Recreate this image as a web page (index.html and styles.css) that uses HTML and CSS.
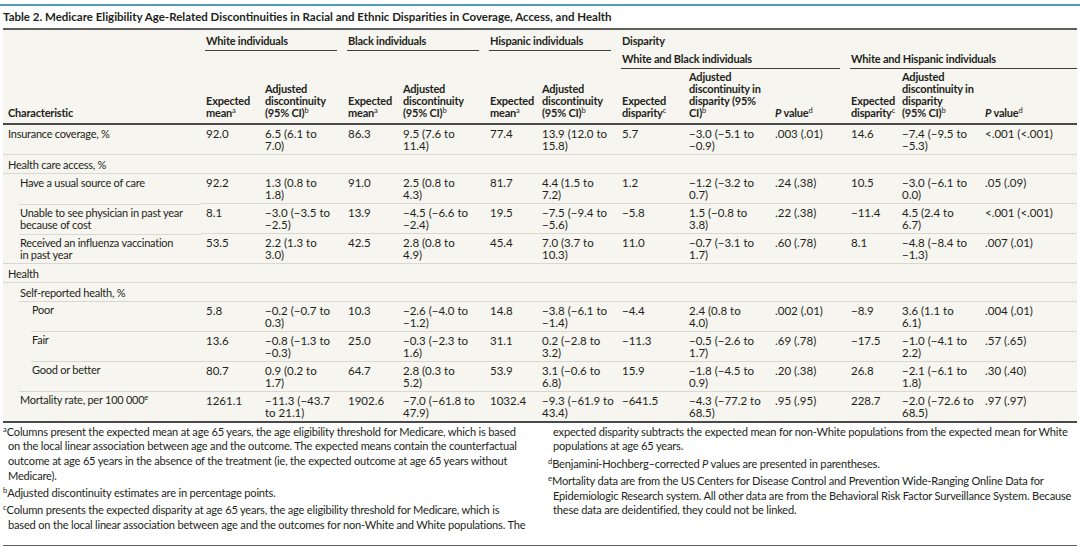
FILE: index.html
```html
<!DOCTYPE html>
<html lang="en">
<head>
<meta charset="utf-8">
<title>Table 2</title>
<link rel="stylesheet" href="styles.css">
</head>
<body>
<div class="page">
  <div class="content">
    <h1 class="title">Table 2. Medicare Eligibility Age-Related Discontinuities in Racial and Ethnic Disparities in Coverage, Access, and Health</h1>
    <table class="tbl">
      <colgroup>
        <col class="w-char">
        <col class="w-2"><col class="w-3"><col class="w-4"><col class="w-5"><col class="w-6"><col class="w-7">
        <col class="w-8"><col class="w-9"><col class="w-10"><col class="w-11"><col class="w-12"><col class="w-13">
      </colgroup>
      <thead>
        <tr class="hr1">
          <th rowspan="3" class="hchar">Characteristic</th>
          <th colspan="2" class="grp"><div>White individuals</div></th>
          <th colspan="2" class="grp"><div>Black individuals</div></th>
          <th colspan="2" class="grp"><div>Hispanic individuals</div></th>
          <th colspan="6" class="grp plain"><div>Disparity</div></th>
        </tr>
        <tr class="hr2">
          <th colspan="6"></th>
          <th colspan="3" class="grp"><div>White and Black individuals</div></th>
          <th colspan="3" class="grp last"><div>White and Hispanic individuals</div></th>
        </tr>
        <tr class="hr3">
          <th>Expected<br>mean<sup>a</sup></th>
          <th>Adjusted<br>discontinuity<br>(95% CI)<sup>b</sup></th>
          <th>Expected<br>mean<sup>a</sup></th>
          <th>Adjusted<br>discontinuity<br>(95% CI)<sup>b</sup></th>
          <th>Expected<br>mean<sup>a</sup></th>
          <th>Adjusted<br>discontinuity<br>(95% CI)<sup>b</sup></th>
          <th>Expected<br>disparity<sup>c</sup></th>
          <th>Adjusted<br>discontinuity in<br>disparity (95%<br>CI)<sup>b</sup></th>
          <th><i>P</i> value<sup>d</sup></th>
          <th>Expected<br>disparity<sup>c</sup></th>
          <th>Adjusted<br>discontinuity in<br>disparity<br>(95% CI)<sup>b</sup></th>
          <th><i>P</i> value<sup>d</sup></th>
        </tr>
      </thead>
      <tbody>
        <tr class="l0 first">
          <td>Insurance coverage, %</td>
          <td>92.0</td><td>6.5 (6.1 to<br>7.0)</td><td>86.3</td><td>9.5 (7.6 to<br>11.4)</td><td>77.4</td><td>13.9 (12.0 to<br>15.8)</td>
          <td>5.7</td><td>−3.0 (−5.1 to<br>−0.9)</td><td>.003 (.01)</td><td>14.6</td><td>−7.4 (−9.5 to<br>−5.3)</td><td>&lt;.001 (&lt;.001)</td>
        </tr>
        <tr class="l0 s0 cat">
          <td>Health care access, %</td>
          <td></td><td></td><td></td><td></td><td></td><td></td><td></td><td></td><td></td><td></td><td></td><td></td>
        </tr>
        <tr class="l1 s0">
          <td>Have a usual source of care</td>
          <td>92.2</td><td>1.3 (0.8 to<br>1.8)</td><td>91.0</td><td>2.5 (0.8 to<br>4.3)</td><td>81.7</td><td>4.4 (1.5 to<br>7.2)</td>
          <td>1.2</td><td>−1.2 (−3.2 to<br>0.7)</td><td>.24 (.38)</td><td>10.5</td><td>−3.0 (−6.1 to<br>0.0)</td><td>.05 (.09)</td>
        </tr>
        <tr class="l1 s1">
          <td>Unable to see physician in past year<br>because of cost</td>
          <td>8.1</td><td>−3.0 (−3.5 to<br>−2.5)</td><td>13.9</td><td>−4.5 (−6.6 to<br>−2.4)</td><td>19.5</td><td>−7.5 (−9.4 to<br>−5.6)</td>
          <td>−5.8</td><td>1.5 (−0.8 to<br>3.8)</td><td>.22 (.38)</td><td>−11.4</td><td>4.5 (2.4 to<br>6.7)</td><td>&lt;.001 (&lt;.001)</td>
        </tr>
        <tr class="l1 s1">
          <td>Received an influenza vaccination<br>in past year</td>
          <td>53.5</td><td>2.2 (1.3 to<br>3.0)</td><td>42.5</td><td>2.8 (0.8 to<br>4.9)</td><td>45.4</td><td>7.0 (3.7 to<br>10.3)</td>
          <td>11.0</td><td>−0.7 (−3.1 to<br>1.7)</td><td>.60 (.78)</td><td>8.1</td><td>−4.8 (−8.4 to<br>−1.3)</td><td>.007 (.01)</td>
        </tr>
        <tr class="l0 s0 cat">
          <td>Health</td>
          <td></td><td></td><td></td><td></td><td></td><td></td><td></td><td></td><td></td><td></td><td></td><td></td>
        </tr>
        <tr class="l1 s0 cat">
          <td>Self-reported health, %</td>
          <td></td><td></td><td></td><td></td><td></td><td></td><td></td><td></td><td></td><td></td><td></td><td></td>
        </tr>
        <tr class="l2 s1">
          <td>Poor</td>
          <td>5.8</td><td>−0.2 (−0.7 to<br>0.3)</td><td>10.3</td><td>−2.6 (−4.0 to<br>−1.2)</td><td>14.8</td><td>−3.8 (−6.1 to<br>−1.4)</td>
          <td>−4.4</td><td>2.4 (0.8 to<br>4.0)</td><td>.002 (.01)</td><td>−8.9</td><td>3.6 (1.1 to<br>6.1)</td><td>.004 (.01)</td>
        </tr>
        <tr class="l2 s2">
          <td>Fair</td>
          <td>13.6</td><td>−0.8 (−1.3 to<br>−0.3)</td><td>25.0</td><td>−0.3 (−2.3 to<br>1.6)</td><td>31.1</td><td>0.2 (−2.8 to<br>3.2)</td>
          <td>−11.3</td><td>−0.5 (−2.6 to<br>1.7)</td><td>.69 (.78)</td><td>−17.5</td><td>−1.0 (−4.1 to<br>2.2)</td><td>.57 (.65)</td>
        </tr>
        <tr class="l2 s2">
          <td>Good or better</td>
          <td>80.7</td><td>0.9 (0.2 to<br>1.7)</td><td>64.7</td><td>2.8 (0.3 to<br>5.2)</td><td>53.9</td><td>3.1 (−0.6 to<br>6.8)</td>
          <td>15.9</td><td>−1.8 (−4.5 to<br>0.9)</td><td>.20 (.38)</td><td>26.8</td><td>−2.1 (−6.1 to<br>1.8)</td><td>.30 (.40)</td>
        </tr>
        <tr class="l1 s1">
          <td>Mortality rate, per 100&nbsp;000<sup>e</sup></td>
          <td>1261.1</td><td>−11.3 (−43.7<br>to 21.1)</td><td>1902.6</td><td>−7.0 (−61.8 to<br>47.9)</td><td>1032.4</td><td>−9.3 (−61.9 to<br>43.4)</td>
          <td>−641.5</td><td>−4.3 (−77.2 to<br>68.5)</td><td>.95 (.95)</td><td>228.7</td><td>−2.0 (−72.6 to<br>68.5)</td><td>.97 (.97)</td>
        </tr>
      </tbody>
    </table>
    <div class="notes">
      <div class="notes-col">
        <p class="note"><sup>a</sup>Columns present the expected mean at age 65 years, the age eligibility threshold for Medicare, which is based<br>on the local linear association between age and the outcome. The expected means contain the counterfactual<br>outcome at age 65 years in the absence of the treatment (ie, the expected outcome at age 65 years without<br>Medicare).</p>
        <p class="note"><sup>b</sup>Adjusted discontinuity estimates are in percentage points.</p>
        <p class="note"><sup>c</sup>Column presents the expected disparity at age 65 years, the age eligibility threshold for Medicare, which is<br>based on the local linear association between age and the outcomes for non-White and White populations. The</p>
      </div>
      <div class="notes-col">
        <p class="note cont">expected disparity subtracts the expected mean for non-White populations from the expected mean for White<br>populations at age 65 years.</p>
        <p class="note"><sup>d</sup>Benjamini-Hochberg–corrected <i>P</i> values are presented in parentheses.</p>
        <p class="note"><sup>e</sup>Mortality data are from the US Centers for Disease Control and Prevention Wide-Ranging Online Data for<br>Epidemiologic Research system. All other data are from the Behavioral Risk Factor Surveillance System. Because<br>these data are deidentified, they could not be linked.</p>
      </div>
    </div>
  </div>
</div>
</body>
</html>
```

FILE: styles.css
```css
* { box-sizing: border-box; }

html, body {
  margin: 0;
  background: #ffffff;
}

body {
  padding-top: 4px;
  color: #231f20;
  font-family: Lato, "Liberation Sans", Arial, sans-serif;
  font-size: 11.5px;
  width: 1080px;
  height: 546px;
  overflow: hidden;
}

.page {
  border-top: 2px solid #4f9bb8;
}

.content {
  margin: 0 3px;
}

.title {
  margin: 0;
  padding: 3px 0 3px;
  font-size: 11.5px;
  line-height: 16px;
  font-weight: 700;
  color: #231f20;
  border-bottom: 2px solid #5e5e5e;
}

.tbl {
  width: 1074px;
  table-layout: fixed;
  border-collapse: collapse;
  border-spacing: 0;
  background: #f6f5ef;
  line-height: 12px;
}

.w-char { width: 198px; }
.w-2 { width: 59px; }
.w-3 { width: 83px; }
.w-4 { width: 55px; }
.w-5 { width: 87px; }
.w-6 { width: 52px; }
.w-7 { width: 80px; }
.w-8 { width: 67px; }
.w-9 { width: 86px; }
.w-10 { width: 76px; }
.w-11 { width: 51px; }
.w-12 { width: 83px; }
.w-13 { width: 97px; }

th {
  text-align: left;
  font-weight: 700;
  font-size: 11px;
  letter-spacing: -0.2px;
  white-space: nowrap;
  padding: 0 4px 0 5px;
}

sup {
  font-size: 7.5px;
  line-height: 0;
  vertical-align: 4px;
  font-weight: 400;
  letter-spacing: 0;
}

.hr1 th { padding-top: 5px; vertical-align: top; }
.hr2 th { padding-top: 2px; vertical-align: top; }
.hr3 th {
  padding-top: 2px;
  padding-bottom: 4px;
  vertical-align: bottom;
  border-bottom: 2px solid #4a4a4a;
}

.hr1 .hchar {
  vertical-align: bottom;
  padding-bottom: 4px;
  border-bottom: 2px solid #4a4a4a;
}

.grp { padding: 0 6px 0 4px; }
.hr1 .grp { padding-top: 5px; }
.hr2 .grp { padding-top: 2px; }
.grp div {
  padding: 0 0 3px 1px;
  border-bottom: 1px solid #3c3c3c;
}
.grp.plain div { border-bottom-color: transparent; }
.grp.last { padding-right: 0; }

td {
  vertical-align: top;
  padding: 3px 4px 2px 5px;
  white-space: nowrap;
  font-size: 11.5px;
}

td:first-child {
  font-size: 11px;
  letter-spacing: -0.25px;
}

.cat td { padding-top: 4px; padding-bottom: 2px; }

tbody tr + tr td { border-top: 1px solid #d9d8d0; }

.l1 td:first-child { padding-left: 17px; }
.l2 td:first-child { padding-left: 29px; }

tbody tr.s1 td:first-child {
  border-top: none;
  background: linear-gradient(#d9d8d0, #d9d8d0) 16px 0 / 100% 1px no-repeat;
}
tbody tr.s2 td:first-child {
  border-top: none;
  background: linear-gradient(#d9d8d0, #d9d8d0) 28px 0 / 100% 1px no-repeat;
}

tbody tr:last-child td { border-bottom: 2px solid #4a4a4a; }

.notes {
  display: grid;
  grid-template-columns: 1fr 1fr;
  column-gap: 16px;
  padding: 2px 0 0;
  height: 124px;
  border-bottom: 2px solid #5e5e5e;
  font-size: 11.1px;
  letter-spacing: -0.2px;
  line-height: 14.8px;
}

.note {
  margin: 0 0 2.5px;
  padding-left: 5px;
  text-indent: -5px;
  white-space: nowrap;
}

.note.cont { text-indent: 0; }

.note sup {
  font-size: 7.5px;
  vertical-align: 4px;
}
```
